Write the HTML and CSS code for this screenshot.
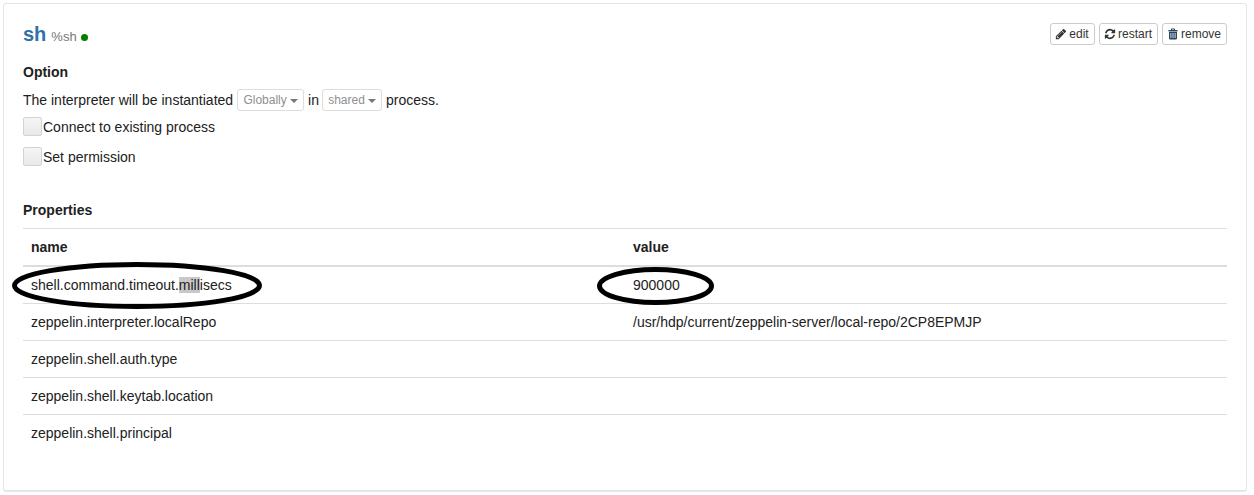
FILE: index.html
```
<!DOCTYPE html>
<html lang="en">
<head>
<meta charset="utf-8">
<title>Interpreter</title>
<link rel="stylesheet" href="styles.css">
</head>
<body>
<main class="card">
  <header class="head">
    <h3 class="title">sh <small class="alias">%sh</small><span class="status"></span></h3>
    <div class="actions">
      <button class="btn"><svg class="icon" viewBox="0 0 1792 1792"><path d="M491 1536l91-91-235-235-91 91v107h128v128h107zm523-928q0-22-22-22-10 0-17 7l-542 542q-7 7-7 17 0 22 22 22 10 0 17-7l542-542q7-7 7-17zm-54-192l416 416-832 832h-416v-416zm683 96q0 53-37 90l-166 166-416-416 166-165q36-38 90-38 53 0 91 38l235 234q37 39 37 91z"/></svg><span>edit</span></button>
      <button class="btn btn-restart"><svg class="icon" viewBox="0 0 1792 1792"><path d="M1639 1056q0 5-1 7-64 268-268 434.500t-478 166.500q-146 0-282.500-55t-243.500-157l-129 129q-19 19-45 19t-45-19-19-45v-448q0-26 19-45t45-19h448q26 0 45 19t19 45-19 45l-137 137q71 66 161 102t187 36q134 0 250-65t186-179q11-17 53-117 8-23 30-23h192q13 0 22.500 9.500t9.500 22.500zm25-800v448q0 26-19 45t-45 19h-448q-26 0-45-19t-19-45 19-45l138-138q-148-137-349-137-134 0-250 65t-186 179q-11 17-53 117-8 23-30 23h-199q-13 0-22.500-9.500t-9.500-22.500v-7q65-268 270-434.500t480-166.500q146 0 284 55.500t245 156.500l130-129q19-19 45-19t45 19 19 45z"/></svg><span>restart</span></button>
      <button class="btn btn-remove"><svg class="icon" viewBox="0 0 12 12"><path fill-rule="evenodd" d="M4 2V1.200Q4 .5 4.700 .5h2.600Q8 .5 8 1.200V2h2.500v1.500h-9V2zm1 0h2v-.6H5zM2 4h8v6.300q0 1.200-1.200 1.200H3.200Q2 11.500 2 10.300zm1.500 1v5h.8V5zm2.100 0v5h.8V5zm2.100 0v5h.8V5z"/></svg><span>remove</span></button>
    </div>
  </header>
  <section class="options">
    <h5 class="heading">Option</h5>
    <div class="sentence"><span>The interpreter will be instantiated</span><button class="select">Globally<i class="caret"></i></button><span class="joiner">in</span><button class="select select-mode">shared<i class="caret"></i></button><span>process.</span></div>
    <label class="check"><span class="box"></span>Connect to existing process</label>
    <label class="check"><span class="box"></span>Set permission</label>
  </section>
  <section class="properties">
    <h5 class="heading">Properties</h5>
    <table class="table">
      <thead><tr><th>name</th><th>value</th></tr></thead>
      <tbody>
        <tr><td><span class="marked">shell.command.timeout.<span class="selected">mill</span>isecs<svg class="ring ring-name" viewBox="0 0 250 47"><ellipse cx="125" cy="23.500" rx="122.500" ry="21"/></svg></span></td><td><span class="marked">900000<svg class="ring ring-value" viewBox="0 0 117 38"><ellipse cx="58.500" cy="19" rx="56" ry="16.500"/></svg></span></td></tr>
        <tr><td>zeppelin.interpreter.localRepo</td><td>/usr/hdp/current/zeppelin-server/local-repo/2CP8EPMJP</td></tr>
        <tr><td>zeppelin.shell.auth.type</td><td></td></tr>
        <tr><td>zeppelin.shell.keytab.location</td><td></td></tr>
        <tr><td>zeppelin.shell.principal</td><td></td></tr>
      </tbody>
    </table>
  </section>
</main>
</body>
</html>
```
FILE: styles.css
```
* { box-sizing: border-box; }
body {
  margin: 0;
  padding: 3px 7px 3px 3px;
  background: #fff;
  color: #212121;
  font: 14px/20px "Liberation Sans", Arial, sans-serif;
}
.card {
  height: 489px;
  padding: 19px;
  border: 1px solid #e5e5e5;
  border-bottom-width: 2px;
  border-radius: 3px;
}
.head { display: flex; justify-content: space-between; height: 39px; }
.title { display: flex; align-items: baseline; margin: 0; color: #3071a9; font-size: 20px; line-height: 22px; }
.alias { margin-left: 5px; color: #777; font-size: 13px; font-weight: 400; }
.status { width: 7px; height: 7px; margin: 0 0 -1px 4px; border-radius: 50%; background: green; }
.actions { display: flex; gap: 4px; height: 22px; }
.btn {
  display: flex;
  align-items: center;
  justify-content: center;
  gap: 2px;
  width: 45px;
  height: 22px;
  padding: 0 1px 0 0;
  border: 1px solid #ccc;
  border-radius: 3px;
  background: #fff;
  color: #333;
  font: 12px/18px "Liberation Sans", Arial, sans-serif;
}
.btn-restart { width: 59px; }
.btn-remove { width: 65px; }
.icon { width: 12px; height: 12px; fill: currentColor; }
.btn-remove .icon { fill: #29455f; }
.heading { margin: 0; font-size: 14px; line-height: 20px; }
.sentence { display: flex; align-items: center; gap: 4px; height: 22px; margin: 7px 0 6px; }
.joiner { margin-right: -1px; }
.select {
  display: flex;
  align-items: center;
  justify-content: center;
  gap: 3px;
  width: 67px;
  height: 22px;
  padding: 0;
  border: 1px solid #ddd;
  border-radius: 3px;
  background: #fff;
  color: #909090;
  font: 12px/18px "Liberation Sans", Arial, sans-serif;
}
.select-mode { width: 60px; }
.caret { margin-top: 2px; border: 4px solid transparent; border-top-color: #777; border-bottom: 0; }
.check { display: flex; align-items: flex-start; gap: 1px; height: 20px; margin-bottom: 10px; }
.box { width: 19px; height: 19px; border: 1px solid #d3d3d3; border-radius: 2px; background: linear-gradient(#f5f5f5, #e9e9e9); }
.properties { margin-top: 33px; }
.table { width: 100%; margin-top: 8px; border-collapse: separate; border-spacing: 0; table-layout: fixed; }
.table th, .table td { height: 37px; padding: 8px; border-top: 1px solid #ddd; text-align: left; line-height: 20px; }
.table th { height: 38px; border-bottom: 1px solid #ddd; }
.marked { position: relative; }
.selected { display: inline-block; height: 16px; line-height: 16px; background: #c8c8c8; }
.ring { position: absolute; overflow: visible; fill: none; stroke: #000; stroke-width: 5px; }
.ring-name { left: -19px; top: -15px; width: 250px; height: 47px; }
.ring-value { left: -36px; top: -10px; width: 117px; height: 38px; }
```
